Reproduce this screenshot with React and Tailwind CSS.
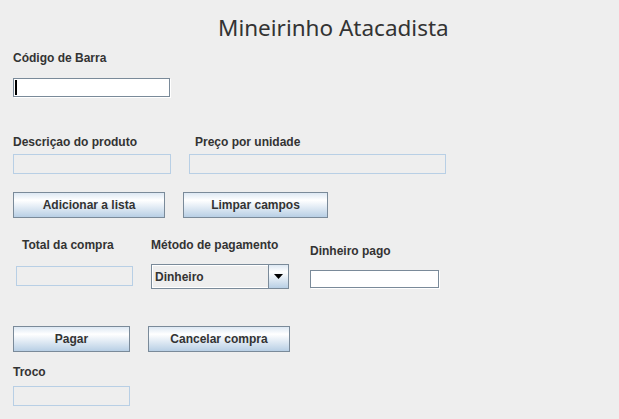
import React from "react";

const label = "font-['Liberation_Sans',Arial,sans-serif] font-bold text-[12px] leading-[14px] text-[#333333] whitespace-nowrap";
const btn = "flex items-center justify-center border border-[#7a8a99] bg-[linear-gradient(to_bottom,#dde8f3_0%,#ffffff_30%,#b8cfe5_100%)] font-['Liberation_Sans',Arial,sans-serif] font-bold text-[12px] text-[#333333] whitespace-nowrap";
const disabledField = "border border-[#b8cfe5] bg-[#eeeeee]";
const enabledField = "border border-[#7a8a99] bg-white shadow-[1px_1px_0_#ffffff]";

export default function App() {
  return (
    <div className="w-[619px] h-[419px] bg-[#eeeeee] overflow-hidden flex flex-col">
      <div className="mt-[12px] pl-[218px] h-[32px] leading-[32px] text-[22.5px] text-[#333333] font-['Noto_Sans',sans-serif] whitespace-nowrap">
        Mineirinho Atacadista
      </div>

      <div className={`mt-[7px] ml-[13px] ${label}`}>Código de Barra</div>

      <div className={`mt-[13px] ml-[13px] w-[157px] h-[19px] ${enabledField} relative`}>
        <div className="absolute left-[1px] top-[1px] w-[2px] h-[15px] bg-black" />
      </div>

      <div className="mt-[38px] flex">
        <div className={`ml-[13px] w-[182px] ${label}`}>Descriçao do produto</div>
        <div className={label}>Preço por unidade</div>
      </div>

      <div className="mt-[5px] flex">
        <div className={`ml-[13px] w-[158px] h-[20px] ${disabledField}`} />
        <div className={`ml-[18px] w-[257px] h-[20px] ${disabledField}`} />
      </div>

      <div className="mt-[18px] flex">
        <div className={`ml-[13px] w-[152px] h-[26px] ${btn}`}>Adicionar a lista</div>
        <div className={`ml-[18px] w-[145px] h-[26px] ${btn}`}>Limpar campos</div>
      </div>

      <div className="flex items-start h-[71px]">
        <div className="ml-[16px] flex flex-col">
          <div className={`mt-[20px] ml-[6px] ${label}`}>Total da compra</div>
          <div className={`mt-[14px] w-[117px] h-[20px] ${disabledField}`} />
        </div>
        <div className="ml-[18px] flex flex-col">
          <div className={`mt-[20px] ${label}`}>Método de pagamento</div>
          <div className="mt-[12px] w-[138px] h-[25px] border border-[#7a8a99] bg-[#eeeeee] flex">
            <div className="flex-1 flex items-center pl-[2px] border border-white border-r-0">
              <span className="font-['Liberation_Sans',Arial,sans-serif] font-bold text-[12px] text-[#333333]">Dinheiro</span>
            </div>
            <div className="w-[20px] border-l border-[#7a8a99] bg-[linear-gradient(to_bottom,#dde8f3_0%,#ffffff_30%,#b8cfe5_100%)] flex items-center justify-center">
              <svg width="9" height="5" viewBox="0 0 9 5">
                <polygon points="0,0 9,0 4.5,5" fill="#000000" />
              </svg>
            </div>
          </div>
        </div>
        <div className="ml-[21px] flex flex-col">
          <div className={`mt-[26px] ${label}`}>Dinheiro pago</div>
          <div className={`mt-[12px] w-[129px] h-[18px] ${enabledField}`} />
        </div>
      </div>

      <div className="mt-[37px] flex">
        <div className={`ml-[13px] w-[117px] h-[26px] ${btn}`}>Pagar</div>
        <div className={`ml-[18px] w-[142px] h-[26px] ${btn}`}>Cancelar compra</div>
      </div>

      <div className={`mt-[13px] ml-[13px] ${label}`}>Troco</div>

      <div className={`mt-[7px] ml-[13px] w-[117px] h-[20px] ${disabledField}`} />
    </div>
  );
}
